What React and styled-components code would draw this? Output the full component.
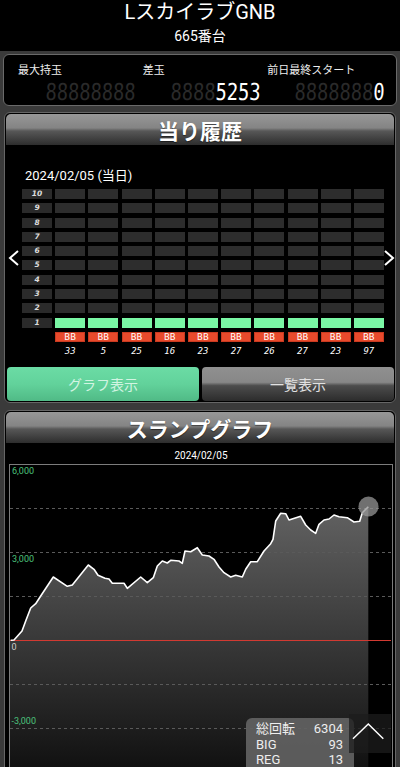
import React from "react";
import styled, { createGlobalStyle } from "styled-components";

const GlobalStyle = createGlobalStyle`
  html, body {
    margin: 0;
    background: #000;
    overflow: hidden;
  }
  body {
    font-family: Roboto, "Noto Sans CJK JP", sans-serif;
    color: #fff;
  }
`;

const Page = styled.div`
  width: 400px;
  height: 767px;
  overflow: hidden;
  background: #3a3a3a;
`;

const Header = styled.header`
  background: #000;
  text-align: center;
  padding-bottom: 5px;
`;

const Title = styled.h1`
  margin: 0;
  font-size: 20px;
  line-height: 25px;
  font-weight: 400;
`;

const Sub = styled.div`
  margin-top: 1px;
  font-size: 14px;
  line-height: 20px;
`;

const Main = styled.main`
  padding: 3px 3px 0;
`;

const StatPanel = styled.section`
  box-sizing: border-box;
  height: 52px;
  background: #000;
  border: 1px solid #6a6a6a;
  border-radius: 6px;
  display: grid;
  grid-template-columns: repeat(3, 1fr);
  column-gap: 7px;
  padding: 9px 11px 0 14px;
`;

const Stat = styled.div`
  display: flex;
  flex-direction: column;
`;

const StatLabel = styled.div`
  font-size: 11px;
  line-height: 14px;
  color: #eee;
`;

const DigitRow = styled.div`
  margin-top: 4px;
  display: flex;
  justify-content: flex-end;
  font-family: "DejaVu Sans Mono", monospace;
  font-size: 18.7px;
  line-height: 20px;
  transform: scaleY(1.25) skewX(-3deg);
`;

const Digits = styled.span`
  color: ${(p) => (p.$lit ? "#fff" : "#2a2a2a")};
`;

const Panel = styled.section`
  position: relative;
  margin: ${(p) => p.$gap}px 1px 0;
  background: #000;
  border: 1px solid #666;
  border-radius: 6px;
  overflow: hidden;
`;

const TitleBar = styled.h2`
  margin: 1px;
  height: 31px;
  border-radius: 5px 5px 0 0;
  background: linear-gradient(180deg, #979797 0%, #848484 45%, #575757 55%, #2d2d2d 100%);
  display: flex;
  align-items: center;
  justify-content: center;
  font-size: 21px;
  font-weight: 700;
  color: #fff;
  text-shadow: 0 1px 1px rgba(0, 0, 0, 0.5);
`;

const HistoryBody = styled.div`
  padding: 21px 1px 1px 17px;
`;

const DateLine = styled.div`
  font-size: 13px;
  line-height: 18px;
  margin: 0 0 4px 3px;
`;

const Grid = styled.div`
  display: grid;
  grid-template-columns: repeat(11, 30px);
  grid-auto-rows: 10px;
  column-gap: 3.2px;
  row-gap: 4.3px;
`;

const RowLabel = styled.div`
  background: #2a2a2a;
  font-family: "DejaVu Sans", sans-serif;
  font-size: 7.5px;
  font-style: italic;
  font-weight: 700;
  line-height: 10px;
  text-align: center;
  color: #ddd;
`;

const Cell = styled.div`
  background: ${(p) => (p.$hit ? "#7af7a5" : "#2d2d2d")};
`;

const BBTag = styled.div`
  background: #e84a2c;
  box-shadow: inset 0 0 0 1px #c93a20;
  font-family: "DejaVu Sans", sans-serif;
  font-size: 8.5px;
  line-height: 10px;
  text-align: center;
  color: #fff;
`;

const Count = styled.div`
  font-family: "DejaVu Sans Mono", monospace;
  font-size: 9px;
  font-style: italic;
  line-height: 10px;
  text-align: center;
  color: #fff;
`;

const Arrow = styled.svg`
  position: absolute;
  top: 137px;
  ${(p) => (p.$side === "left" ? "left: 3px;" : "right: 0px;")}
`;

const ButtonRow = styled.div`
  margin: 11px 0 0 -15px;
  display: grid;
  grid-template-columns: 1fr 1fr;
  gap: 3px;
`;

const ToggleButton = styled.button`
  height: 34px;
  border: none;
  border-radius: 4px;
  font-family: Roboto, "Noto Sans CJK JP", sans-serif;
  font-size: 14px;
  color: ${(p) => (p.$active ? "#d2f4e2" : "#e2e2e2")};
  background: ${(p) =>
    p.$active
      ? "linear-gradient(180deg, #6bdca5 0%, #62d29b 50%, #50ba86 100%)"
      : "linear-gradient(180deg, #909090 0%, #878787 45%, #4c4c4c 55%, #2c2c2c 100%)"};
`;

const GraphBody = styled.div`
  padding: 5px 2px 0 4px;
`;

const GraphDate = styled.div`
  font-size: 10px;
  line-height: 13px;
  text-align: center;
  margin-bottom: 2px;
`;

const Chart = styled.div`
  position: relative;
  height: 330px;
  border: 1px solid #7c7c7c;
  background: #000;
`;

const InfoBox = styled.div`
  position: absolute;
  left: 236px;
  top: 253px;
  width: 108px;
  height: 80px;
  box-sizing: border-box;
  padding: 3px 11px 0 10px;
  border-radius: 6px 6px 0 0;
  background: rgba(98, 98, 98, 0.92);
`;

const InfoRow = styled.div`
  display: flex;
  justify-content: space-between;
  font-size: 13px;
  line-height: 15.5px;
  color: #eee;
`;

const TopButton = styled.div`
  position: absolute;
  left: 339px;
  top: 249px;
  width: 42px;
  height: 39px;
  background: rgba(28, 28, 28, 0.75);
`;

const stats = [
  { label: "最大持玉", dim: "88888888", lit: "" },
  { label: "差玉", dim: "8888", lit: "5253" },
  { label: "前日最終スタート", dim: "8888888", lit: "0" },
];

const rows = [10, 9, 8, 7, 6, 5, 4, 3, 2, 1];
const counts = ["33", "5", "25", "16", "23", "27", "26", "27", "23", "97"];

const pts = [
  [11.7, 639.3], [15, 639], [23, 630], [26.7, 620], [31.7, 607], [36.7, 602.7],
  [41.7, 595], [54.3, 576], [68.3, 585.3], [73.3, 584], [89.3, 564], [95, 568.3],
  [99, 574.3], [106, 577.3], [110, 578], [113.3, 582.3], [125, 582.3], [128.3, 587.3],
  [141.7, 576], [148.3, 581.7], [154.3, 576.7], [158.3, 565], [163.3, 560], [168.3, 562],
  [171.7, 559.3], [180, 560], [183.3, 562.3], [186, 550], [191.7, 550.7], [198.3, 546.7],
  [203.3, 554], [210, 555], [215, 558.3], [220, 566], [225, 571.7], [231.7, 576],
  [236.7, 574.3], [243.3, 576], [246.7, 568.3], [251.7, 560.7], [258.3, 560.7], [265, 550],
  [271.7, 542.7], [274, 538.3], [276.7, 520], [281.7, 512.3], [286.7, 512.7], [290, 519],
  [301.7, 515.3], [306.7, 524], [311.7, 529], [316.7, 532.3], [320, 523.3], [325, 519],
  [330, 518], [335, 514], [340, 515.7], [348.3, 516.7], [355, 521], [360.7, 520.3],
  [363.3, 511.7], [369.3, 505.7],
];

function SlumpChart() {
  const line = pts.map((p) => p.join(",")).join(" ");
  const area = `M11,639.3 L${line.replace(/ /g, " L")} L369.3,800 L11,800 Z`;
  const dashed = [507, 551, 595, 683, 727];

  return (
    <svg width="381" height="328" viewBox="11 464 381 328" style={{ display: "block" }}>
      <defs>
        <linearGradient id="fill" x1="0" y1="505" x2="0" y2="767" gradientUnits="userSpaceOnUse">
          <stop offset="0" stopColor="#626262" />
          <stop offset="1" stopColor="#111" />
        </linearGradient>
      </defs>
      <path d={area} fill="url(#fill)" />
      {dashed.map((y) => (
        <line key={y} x1="11" x2="392" y1={y + 0.5} y2={y + 0.5} stroke="#5a5a5a" strokeDasharray="3 3" />
      ))}
      <line x1="11" x2="392" y1="639.5" y2="639.5" stroke="#d23a32" />
      <polyline points={line} fill="none" stroke="#fff" strokeWidth="1.6" strokeLinejoin="round" />
      <circle cx="369.5" cy="505.5" r="10" fill="rgba(150,150,150,0.75)" />
      <g fontFamily="Roboto, sans-serif" fontSize="9">
        <text x="13" y="472.5" fill="#4cc27c">6,000</text>
        <text x="13" y="561" fill="#4cc27c">3,000</text>
        <text x="12.5" y="649" fill="#ccc">0</text>
        <text x="12.5" y="722.5" fill="#4cc27c">-3,000</text>
      </g>
    </svg>
  );
}

export default function App() {
  return (
    <Page>
      <GlobalStyle />
      <Header>
        <Title>LスカイラブGNB</Title>
        <Sub>665番台</Sub>
      </Header>

      <Main>
        <StatPanel>
          {stats.map((s) => (
            <Stat key={s.label}>
              <StatLabel>{s.label}</StatLabel>
              <DigitRow>
                <Digits>{s.dim}</Digits>
                <Digits $lit>{s.lit}</Digits>
              </DigitRow>
            </Stat>
          ))}
        </StatPanel>

        <Panel $gap={6}>
          <TitleBar>当り履歴</TitleBar>
          <HistoryBody>
            <DateLine>2024/02/05 (当日)</DateLine>
            <Grid>
              {rows.map((r) => (
                <React.Fragment key={r}>
                  <RowLabel>{r}</RowLabel>
                  {counts.map((_, i) => (
                    <Cell key={i} $hit={r === 1} />
                  ))}
                </React.Fragment>
              ))}
              <span />
              {counts.map((_, i) => (
                <BBTag key={i}>BB</BBTag>
              ))}
              <span />
              {counts.map((c, i) => (
                <Count key={i}>{c}</Count>
              ))}
            </Grid>
            <ButtonRow>
              <ToggleButton $active>グラフ表示</ToggleButton>
              <ToggleButton>一覧表示</ToggleButton>
            </ButtonRow>
          </HistoryBody>
          <Arrow $side="left" width="12" height="16" viewBox="0 0 12 16">
            <polyline points="10,1 2,8 10,15" fill="none" stroke="#fff" strokeWidth="2" />
          </Arrow>
          <Arrow $side="right" width="12" height="16" viewBox="0 0 12 16">
            <polyline points="2,1 10,8 2,15" fill="none" stroke="#fff" strokeWidth="2" />
          </Arrow>
        </Panel>

        <Panel $gap={7}>
          <TitleBar>スランプグラフ</TitleBar>
          <GraphBody>
            <GraphDate>2024/02/05</GraphDate>
            <Chart>
              <SlumpChart />
              <InfoBox>
                <InfoRow>
                  <span>総回転</span>
                  <span>6304</span>
                </InfoRow>
                <InfoRow>
                  <span>BIG</span>
                  <span>93</span>
                </InfoRow>
                <InfoRow>
                  <span>REG</span>
                  <span>13</span>
                </InfoRow>
              </InfoBox>
              <TopButton>
                <svg width="42" height="39" viewBox="0 0 42 39">
                  <polyline points="4,24.7 19.3,10 34.3,24.7" fill="none" stroke="#fff" strokeWidth="1.5" />
                </svg>
              </TopButton>
            </Chart>
          </GraphBody>
        </Panel>
      </Main>
    </Page>
  );
}
